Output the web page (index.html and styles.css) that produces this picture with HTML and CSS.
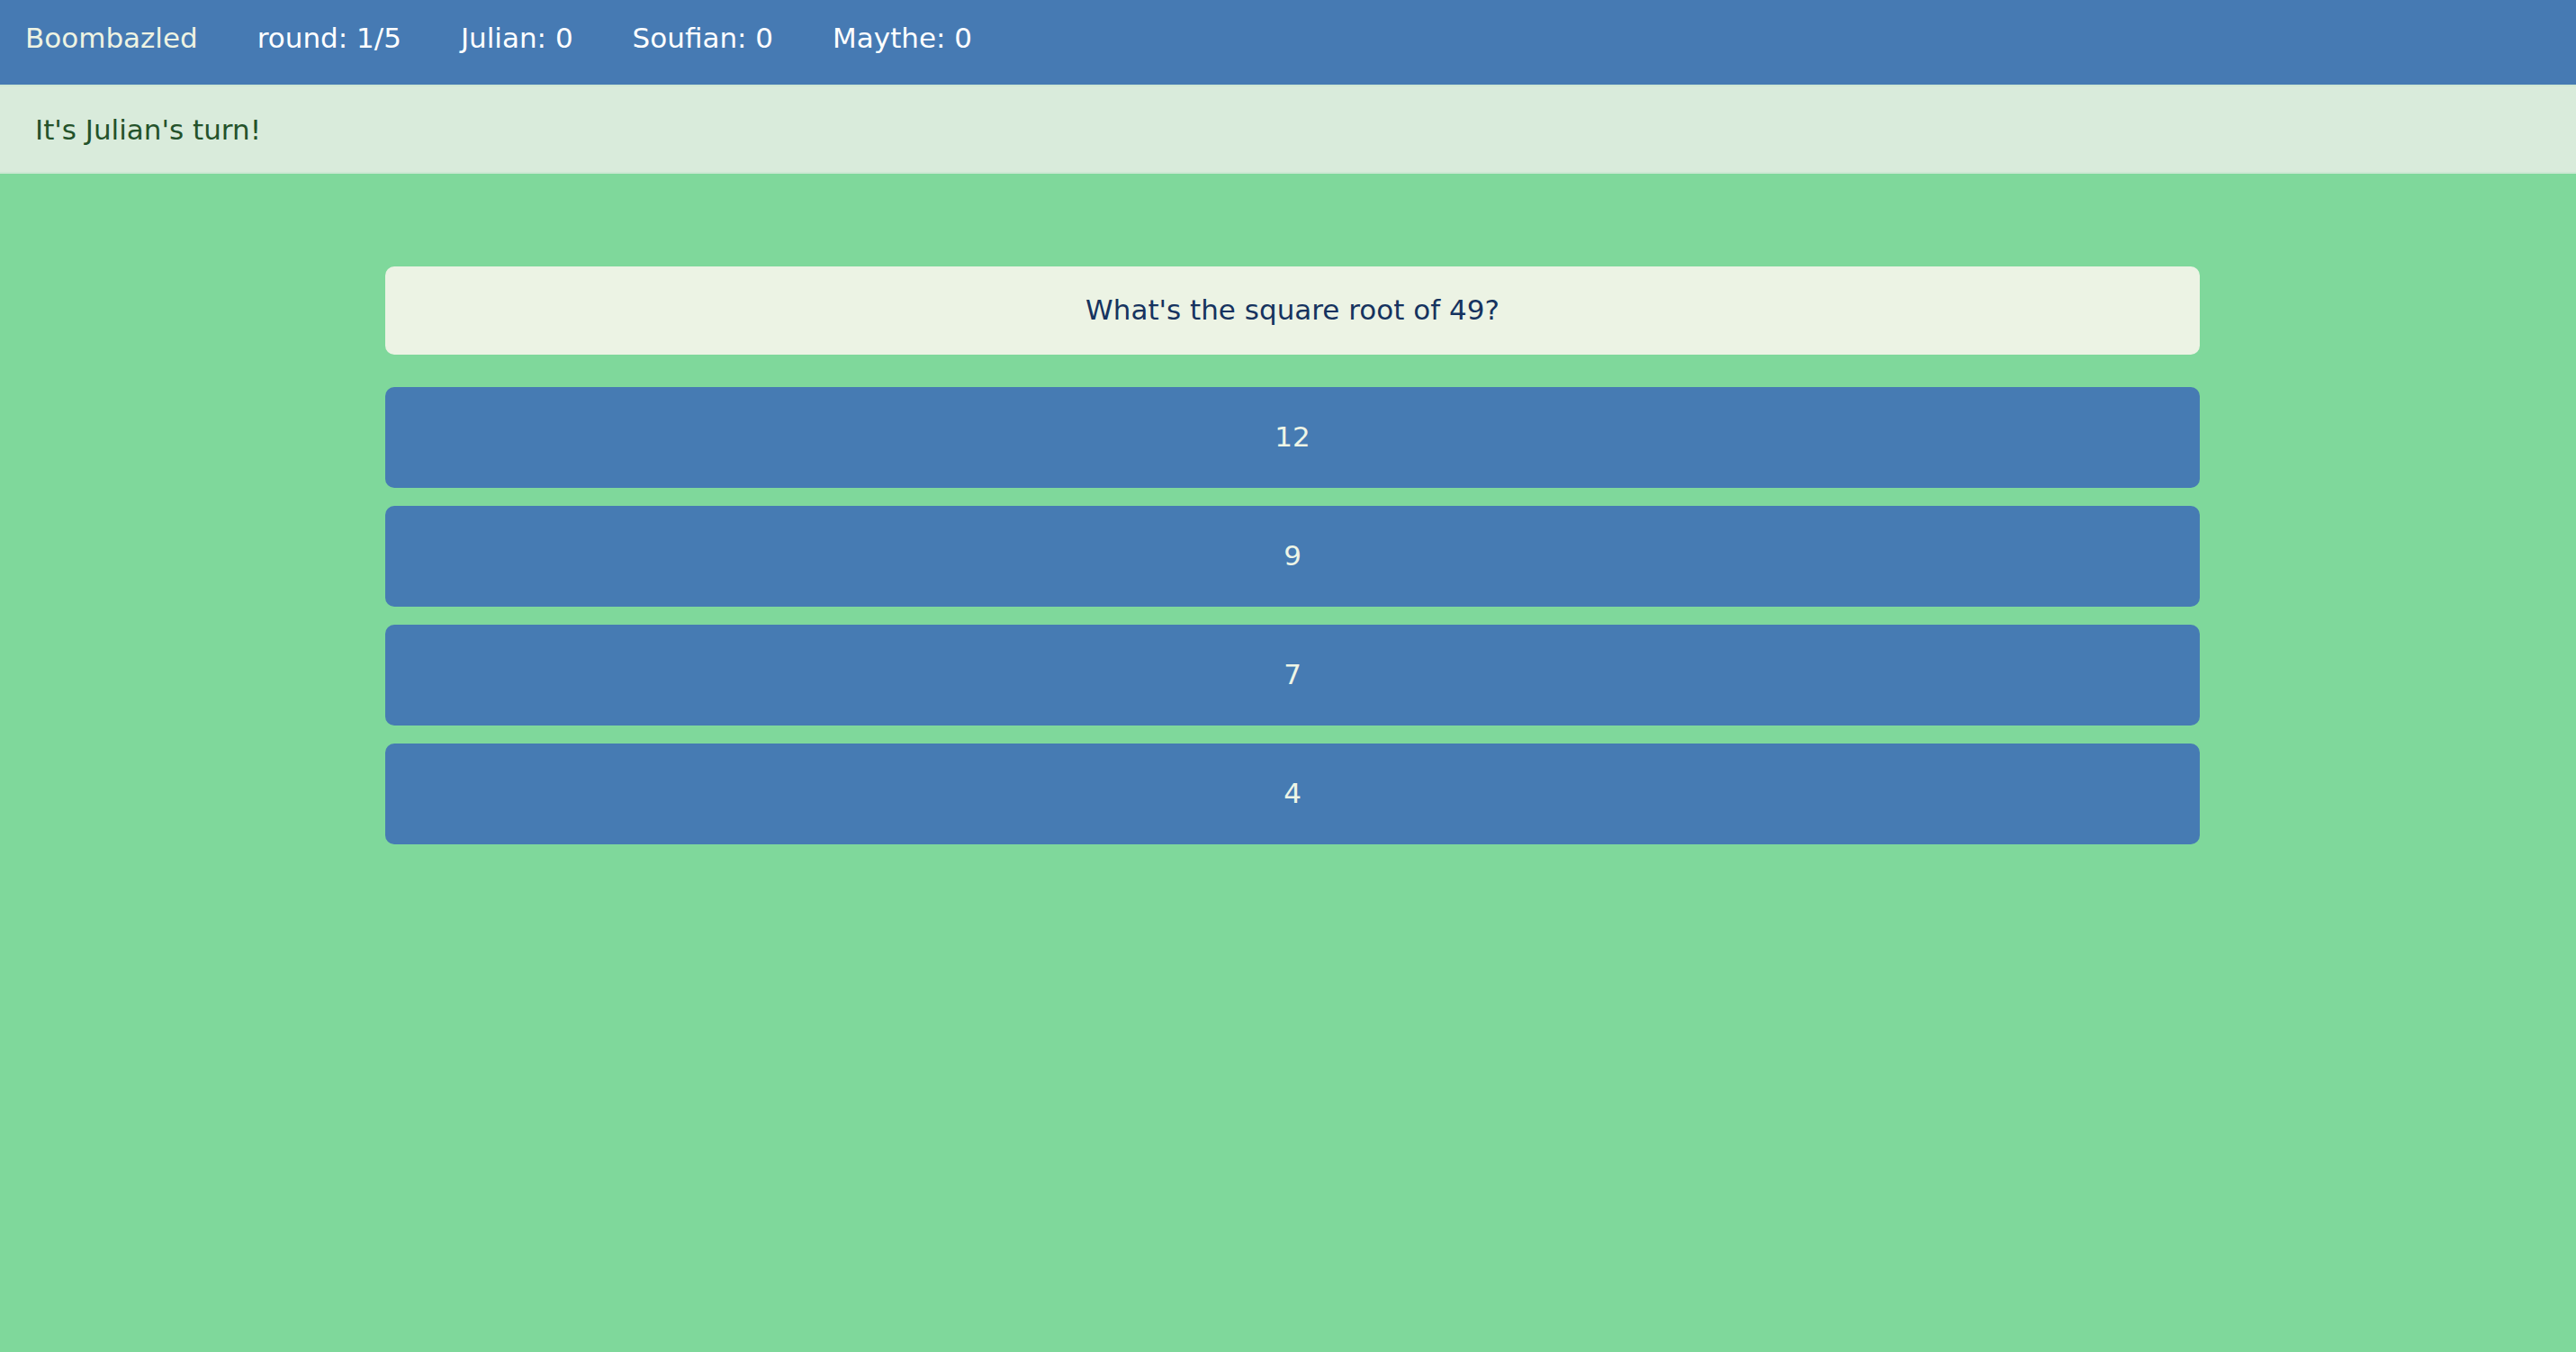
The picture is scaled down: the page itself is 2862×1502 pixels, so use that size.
FILE: index.html
```html
<!DOCTYPE html>
<html lang="en">
<head>
<meta charset="utf-8">
<title>Boombazled</title>
<link rel="stylesheet" href="styles.css">
</head>
<body>
<header class="topbar">
  <span class="brand">Boombazled</span>
  <span class="stat">round: 1/5</span>
  <span class="stat">Julian: 0</span>
  <span class="stat">Soufian: 0</span>
  <span class="stat">Maythe: 0</span>
</header>
<div class="turn">It's Julian's turn!</div>
<main class="game">
  <div class="quiz">
    <div class="question">What's the square root of 49?</div>
    <div class="answers">
      <button class="answer">12</button>
      <button class="answer">9</button>
      <button class="answer">7</button>
      <button class="answer">4</button>
    </div>
  </div>
</main>
</body>
</html>
```
FILE: styles.css
```css
html, body {
  margin: 0;
  padding: 0;
  height: 100%;
}
body {
  background: #7fd89b;
  font-family: "DejaVu Sans", "Liberation Sans", sans-serif;
  font-size: 31px;
}
.topbar {
  height: 94px;
  box-sizing: border-box;
  background: #467ab3;
  display: flex;
  align-items: center;
  padding: 0 0 10px 28px;
  gap: 66px;
  color: #ffffff;
}
.brand {
  color: #eef3e2;
}
.turn {
  height: 99px;
  box-sizing: border-box;
  background: #d9ebdb;
  border-top: 2px solid #cfe7d4;
  border-bottom: 2px solid #cde8d3;
  color: #24522a;
  display: flex;
  align-items: center;
  padding: 1px 0 0 39px;
}
.game {
  display: flex;
  justify-content: center;
  padding: 103px 0 0 10px;
}
.quiz {
  width: 2016px;
  display: flex;
  flex-direction: column;
  gap: 36px;
}
.question {
  height: 98px;
  box-sizing: border-box;
  padding-bottom: 2px;
  background: #ecf3e4;
  border-radius: 10px;
  color: #16335f;
  display: flex;
  align-items: center;
  justify-content: center;
}
.answers {
  display: flex;
  flex-direction: column;
  gap: 20px;
}
.answer {
  height: 112px;
  border: none;
  border-radius: 10px;
  background: #467bb3;
  color: #eef5e6;
  font-family: inherit;
  font-size: 31px;
  padding: 0 0 2px;
  cursor: pointer;
}
```
